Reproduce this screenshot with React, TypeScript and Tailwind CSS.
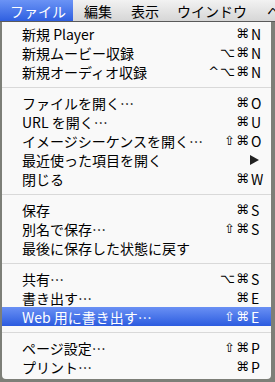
import React from "react";

type Item =
  | { type: "sep" }
  | { type: "item"; label: string; mods?: string; key?: string; arrow?: boolean; active?: boolean };

const items: Item[] = [
  { type: "item", label: "新規 Player", mods: "⌘", key: "N" },
  { type: "item", label: "新規ムービー収録", mods: "⌥⌘", key: "N" },
  { type: "item", label: "新規オーディオ収録", mods: "^⌥⌘", key: "N" },
  { type: "sep" },
  { type: "item", label: "ファイルを開く…", mods: "⌘", key: "O" },
  { type: "item", label: "URL を開く…", mods: "⌘", key: "U" },
  { type: "item", label: "イメージシーケンスを開く…", mods: "⇧⌘", key: "O" },
  { type: "item", label: "最近使った項目を開く", arrow: true },
  { type: "item", label: "閉じる", mods: "⌘", key: "W" },
  { type: "sep" },
  { type: "item", label: "保存", mods: "⌘", key: "S" },
  { type: "item", label: "別名で保存…", mods: "⇧⌘", key: "S" },
  { type: "item", label: "最後に保存した状態に戻す" },
  { type: "sep" },
  { type: "item", label: "共有…", mods: "⌥⌘", key: "S" },
  { type: "item", label: "書き出す…", mods: "⌘", key: "E" },
  { type: "item", label: "Web 用に書き出す…", mods: "⇧⌘", key: "E", active: true },
  { type: "sep" },
  { type: "item", label: "ページ設定…", mods: "⇧⌘", key: "P" },
  { type: "item", label: "プリント…", mods: "⌘", key: "P" },
];

const font = { fontFamily: '"Noto Sans CJK JP", "Noto Sans", sans-serif' };

export default function App() {
  return (
    <div
      className="w-[275px] h-[382px] overflow-hidden bg-[#7d7f78] flex flex-col"
      style={font}
    >
      {/* menu bar */}
      <div className="h-[21px] shrink-0 flex items-stretch overflow-hidden whitespace-nowrap bg-gradient-to-b from-[#f2f2f2] to-[#d6d6d6] text-[14px] text-black leading-none">
        <div className="px-[10px] w-[73px] shrink-0 flex items-center bg-gradient-to-b from-[#6b93f5] to-[#2f5fe0] text-white">
          ファイル
        </div>
        <div className="pl-[11px] pr-[10px] shrink-0 flex items-center">編集</div>
        <div className="px-[9px] shrink-0 flex items-center">表示</div>
        <div className="pl-[9px] pr-[10px] shrink-0 flex items-center">ウインドウ</div>
        <div className="pl-[10px] shrink-0 flex items-center">ヘ</div>
      </div>
      <div className="h-[1px] shrink-0 bg-[#5a5a5a]" />
      {/* dropdown */}
      <div className="ml-[2px] w-[269px] h-[357px] shrink-0 bg-[#f9f9f9] pt-[2px] flex flex-col rounded-b-[4px]">
        {items.map((it, i) =>
          it.type === "sep" ? (
            <div key={i} className="h-[12px] shrink-0 flex items-center">
              <div className="h-[1px] w-full bg-[#d9d9d9]" />
            </div>
          ) : (
            <div
              key={i}
              className={
                "h-[19px] shrink-0 flex items-center pl-[20px] pr-[9px] text-[14px] leading-none " +
                (it.active
                  ? "bg-gradient-to-b from-[#6a90f4] to-[#2c5bdf] text-white"
                  : "text-black")
              }
            >
              <span className="flex-1 whitespace-nowrap">{it.label}</span>
              {it.arrow ? (
                <span className="w-[12px] flex justify-start">
                  <svg width="9" height="10" viewBox="0 0 9 10">
                    <path d="M0 0 L9 5 L0 10 Z" fill="#222" />
                  </svg>
                </span>
              ) : it.key ? (
                <span className="flex items-center">
                  <span
                    className="text-right text-[13px] tracking-[1px]"
                    style={{ fontFamily: '"DejaVu Sans", sans-serif' }}
                  >
                    {it.mods}
                  </span>
                  <span className="w-[12px] pl-[1px] text-[14px]">{it.key}</span>
                </span>
              ) : null}
            </div>
          )
        )}
      </div>
    </div>
  );
}
